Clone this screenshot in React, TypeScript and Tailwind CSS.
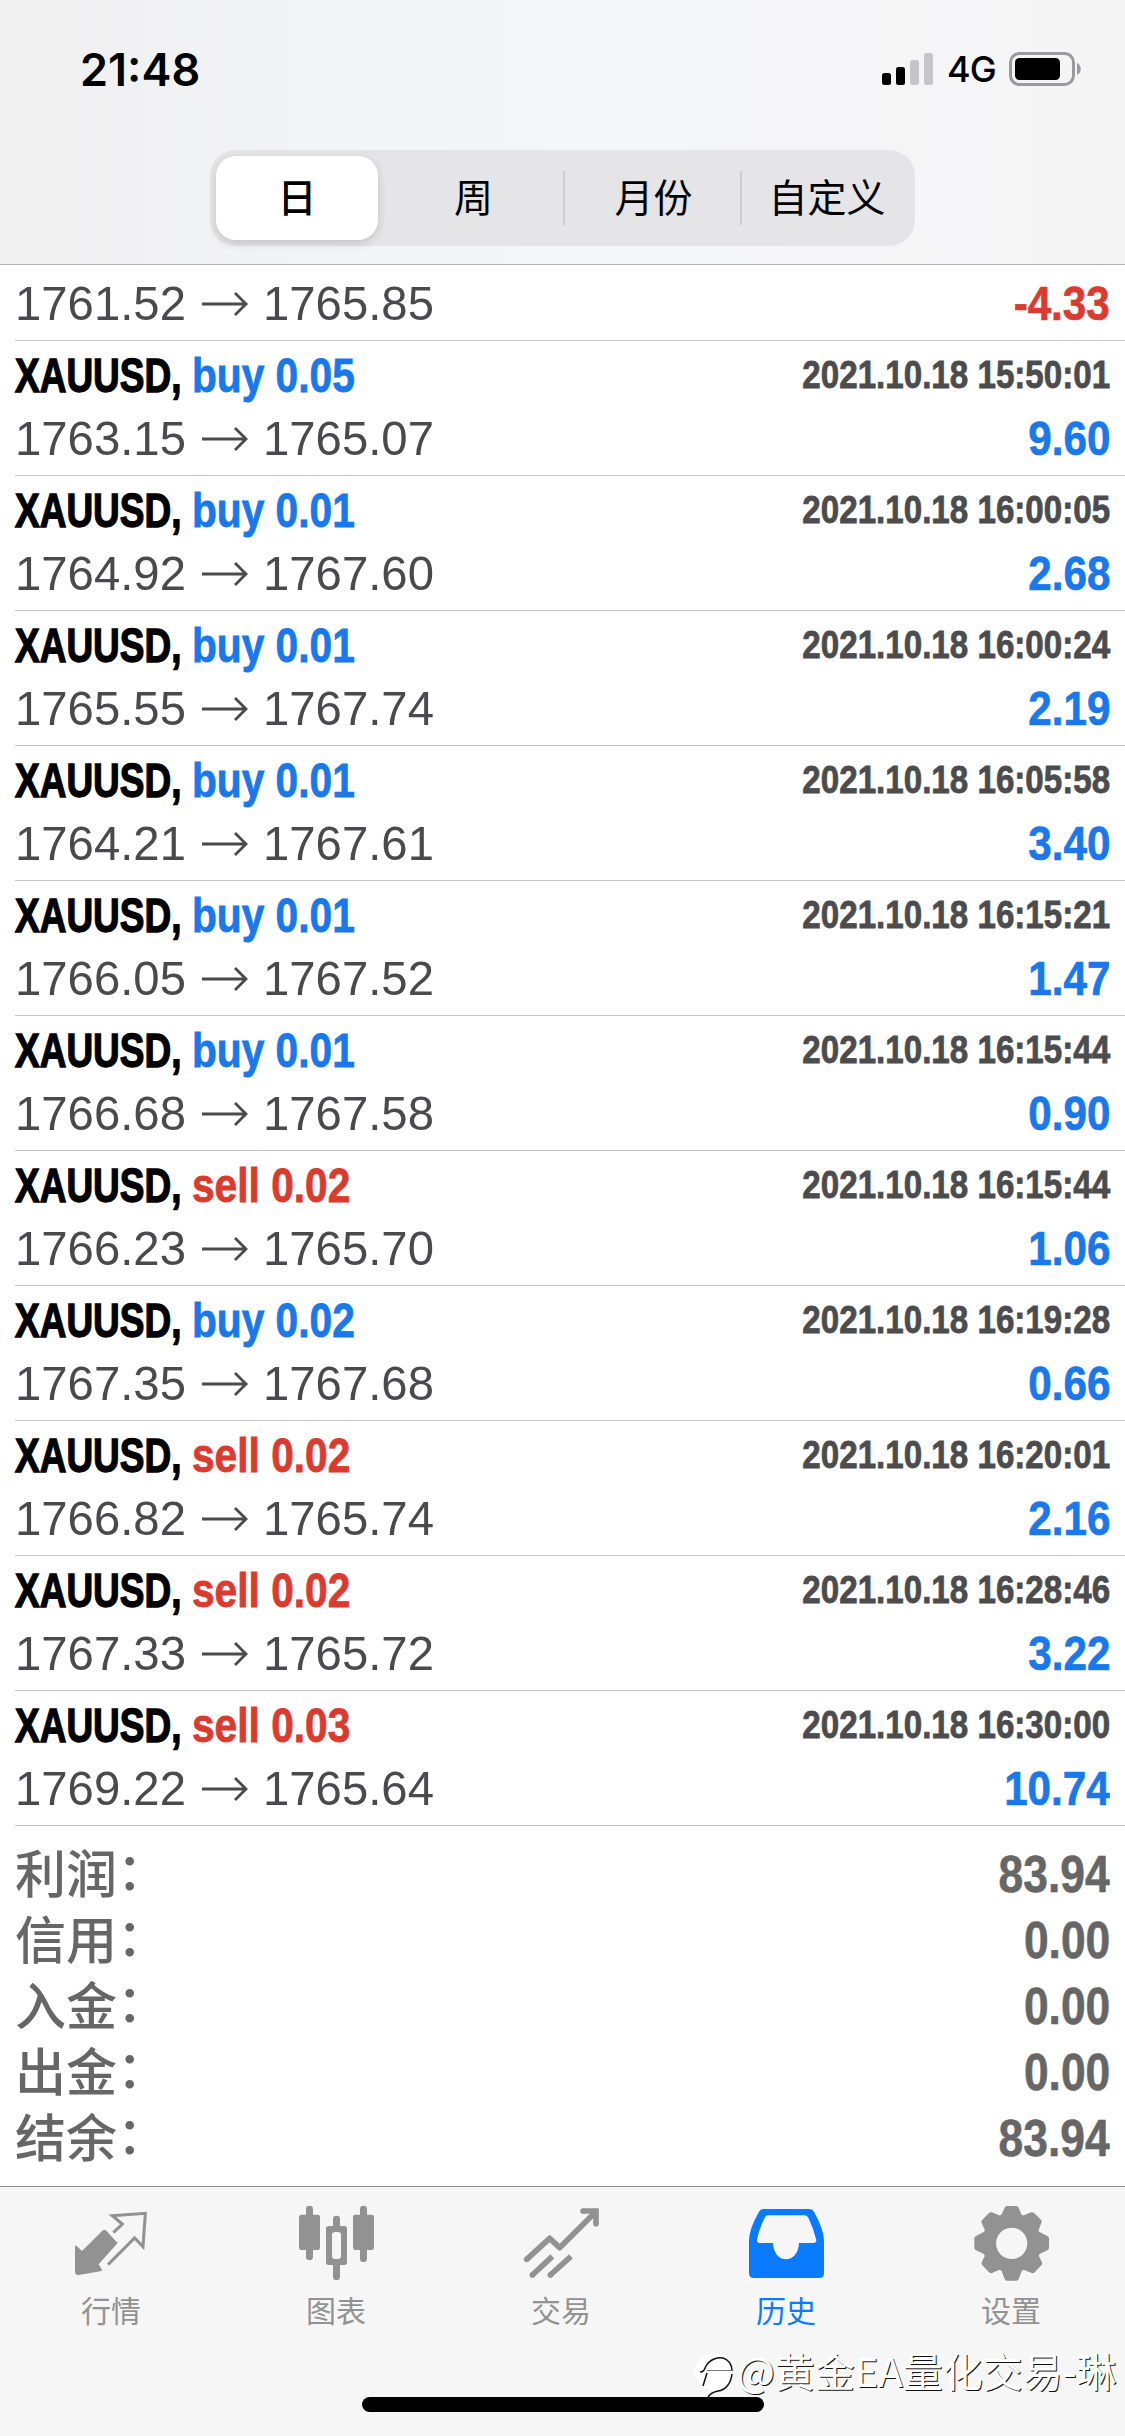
import type { ReactNode } from "react";
import clsx from "clsx";

interface Deal {
  side: "buy" | "sell";
  volume: string;
  open: string;
  close: string;
  time: string;
  profit: string;
}

const deals: Deal[] = [
  { side: "buy", volume: "0.05", open: "1763.15", close: "1765.07", time: "2021.10.18 15:50:01", profit: "9.60" },
  { side: "buy", volume: "0.01", open: "1764.92", close: "1767.60", time: "2021.10.18 16:00:05", profit: "2.68" },
  { side: "buy", volume: "0.01", open: "1765.55", close: "1767.74", time: "2021.10.18 16:00:24", profit: "2.19" },
  { side: "buy", volume: "0.01", open: "1764.21", close: "1767.61", time: "2021.10.18 16:05:58", profit: "3.40" },
  { side: "buy", volume: "0.01", open: "1766.05", close: "1767.52", time: "2021.10.18 16:15:21", profit: "1.47" },
  { side: "buy", volume: "0.01", open: "1766.68", close: "1767.58", time: "2021.10.18 16:15:44", profit: "0.90" },
  { side: "sell", volume: "0.02", open: "1766.23", close: "1765.70", time: "2021.10.18 16:15:44", profit: "1.06" },
  { side: "buy", volume: "0.02", open: "1767.35", close: "1767.68", time: "2021.10.18 16:19:28", profit: "0.66" },
  { side: "sell", volume: "0.02", open: "1766.82", close: "1765.74", time: "2021.10.18 16:20:01", profit: "2.16" },
  { side: "sell", volume: "0.02", open: "1767.33", close: "1765.72", time: "2021.10.18 16:28:46", profit: "3.22" },
  { side: "sell", volume: "0.03", open: "1769.22", close: "1765.64", time: "2021.10.18 16:30:00", profit: "10.74" },
];

const totals = [
  { label: "利润", value: "83.94" },
  { label: "信用", value: "0.00" },
  { label: "入金", value: "0.00" },
  { label: "出金", value: "0.00" },
  { label: "结余", value: "83.94" },
];

function StatusBar() {
  return (
    <div className="flex h-[138px] items-center justify-between pl-[80px] pr-[42px] font-['Inter',sans-serif]">
      <span className="text-[45px] font-semibold leading-none">21:48</span>
      <div className="flex items-center">
        <svg className="h-[34px] w-[52px]" viewBox="0 0 52 34">
          <rect x="0" y="21" width="9" height="12" rx="2.5" />
          <rect x="14" y="15" width="9" height="18" rx="2.5" />
          <rect x="28" y="8" width="9" height="25" rx="2.5" fill="#c6c6c8" />
          <rect x="42" y="1" width="9" height="32" rx="2.5" fill="#c6c6c8" />
        </svg>
        <span className="ml-[13px] w-[62px] text-[36px] font-medium leading-none tracking-[-1px]">4G</span>
        <svg className="h-[34px] w-[74px]" viewBox="0 0 74 34">
          <rect x="1.5" y="1.5" width="63" height="31" rx="9" fill="none" stroke="#9a9a9c" strokeWidth="3" />
          <rect x="6" y="6" width="45" height="22" rx="4.5" />
          <path d="M68 11c5 2 5 10 0 12z" fill="#9a9a9c" />
        </svg>
      </div>
    </div>
  );
}

function PeriodTabs() {
  return (
    <div className="ml-[210px] mt-3 grid h-[96px] w-[705px] grid-cols-[168px_181px_177px_1fr] rounded-[26px] bg-[#e5e5e7] p-[6px] text-center font-['Noto_Sans_CJK_SC',sans-serif] text-[39px] leading-[79px]">
      <div className="mr-[6px] rounded-[20px] bg-white font-medium shadow-[0_3px_10px_rgba(0,0,0,0.15)]">日</div>
      <div className="pr-[2px]">周</div>
      <div className="-ml-[2px] flex items-start">
        <i className="mt-[15px] h-[54px] w-[2px] bg-[#cdcdd0]" />
        <span className="flex-1">月份</span>
      </div>
      <div className="-ml-[2px] flex items-start">
        <i className="mt-[15px] h-[54px] w-[2px] bg-[#cdcdd0]" />
        <span className="flex-1 pl-[3px]">自定义</span>
      </div>
    </div>
  );
}

function PriceLine({ open, close, profit }: { open: string; close: string; profit: string }) {
  return (
    <div className="flex h-[75px] items-center justify-between pr-[15px] pt-[2px] text-[49px] leading-[73px]">
      <div className="flex items-center text-[#4a4a4c]">
        <span className="w-[187px] origin-left scale-x-[0.965] whitespace-nowrap">{open}</span>
        <svg className="h-[24px] w-[46px]" viewBox="0 0 46 24" fill="none" stroke="#4a4a4c" strokeWidth="2.8">
          <path d="M0 12H44M33 1l11 11-11 11" />
        </svg>
        <span className="ml-[15px] origin-left scale-x-[0.965]">{close}</span>
      </div>
      <span
        className={clsx(
          "origin-right scale-x-[0.86] font-bold [-webkit-text-stroke:0.7px_currentColor]",
          profit.startsWith("-") ? "text-[#db3b2f]" : "text-[#1878ec]"
        )}
      >
        {profit}
      </span>
    </div>
  );
}

function DealRow({ deal }: { deal: Deal }) {
  return (
    <div className="ml-[15px] h-[135px] border-b border-[#c4c4c8] pt-[9px]">
      <div className="flex h-[50px] justify-between pr-[15px] font-bold leading-[51px] [-webkit-text-stroke:0.8px_currentColor]">
        <div className="flex text-[49px]">
          <div className="w-[177px]">
            <span className="inline-block origin-left scale-x-[0.755] [-webkit-text-stroke:1.4px_currentColor]">XAUUSD,</span>
          </div>
          <span
            className={clsx(
              "origin-left scale-x-[0.83]",
              deal.side === "buy" ? "text-[#1878ec]" : "text-[#db3b2f]"
            )}
          >
            {deal.side} {deal.volume}
          </span>
        </div>
        <span className="origin-right scale-x-[0.85] text-[39px] leading-[50px] text-[#4c4c4e]">{deal.time}</span>
      </div>
      <PriceLine open={deal.open} close={deal.close} profit={deal.profit} />
    </div>
  );
}

function TabItem({ label, box, active, children }: { label: string; box: string; active?: boolean; children: ReactNode }) {
  return (
    <div className={clsx("flex flex-col items-center pt-[13px]", active ? "text-[#0a7aff]" : "text-[#929292]")}>
      <svg className="h-[90px] w-[90px]" viewBox={box} fill="currentColor">
        {children}
      </svg>
      <span className="pr-[3px] font-['Noto_Sans_CJK_SC',sans-serif] text-[30px] leading-[39px]">{label}</span>
    </div>
  );
}

function TabBar() {
  return (
    <nav className="grid h-[211px] grid-cols-5 border-t border-[#8e8e8e]">
      <TabItem label="行情" box="204 90 270 270">
        <path d="M225 228q2-3 5 0l16 15 61-61q6-5 12 0l34 37-57 64 10 17q0 4-5 4l-65 11q-11 0-11-10z" />
        <path d="M340 188l27-26-30-25 99-7-7 100-25-26-80 80" fill="none" stroke="currentColor" strokeWidth="9" />
      </TabItem>
      <TabItem label="图表" box="879 90 270 270">
        <rect x="918" y="107" width="21" height="163" rx="10" />
        <rect x="897" y="134" width="63" height="106" rx="7" />
        <rect x="1080" y="107" width="21" height="169" rx="10" />
        <rect x="1059" y="134" width="63" height="106" rx="7" />
        <rect x="999" y="137" width="21" height="193" rx="10" />
        <rect x="978" y="168" width="63" height="117" rx="8" />
        <rect x="996" y="186" width="27" height="81" rx="9" fill="#f6f6f6" />
      </TabItem>
      <TabItem label="交易" box="174 90 270 270">
        <g fill="none" stroke="currentColor" strokeWidth="17">
          <path d="M200 268l69-63 30 28 104-103" strokeLinejoin="round" />
          <path d="M217 315l60-56M271 315l62-56M369 123h39v38" />
        </g>
        <circle cx="200" cy="268" r="8.500" />
        <circle cx="217" cy="315" r="8.500" />
        <circle cx="271" cy="315" r="8.500" />
        <circle cx="369" cy="123" r="8.500" />
        <circle cx="408" cy="161" r="8.500" />
      </TabItem>
      <TabItem label="历史" box="159 90 270 270" active>
        <path
          fillRule="evenodd"
          d="M220 117H359q9 0 13 8 29 52 30 87V310q0 14-14 14H191q-14 0-14-14V212q0-35 30-87 4-8 13-8ZM235 136q-8 0-11 7-17 36-23 66 0 10 9 10h39c1 30 18 49 39 49s38-19 39-49h43q9 0 9-9-9-36-24-67-4-7-12-7Z"
        />
      </TabItem>
      <TabItem label="设置" box="834 90 270 270">
        <path
          fillRule="evenodd"
          d="M951 108h28q5 0 7 5l8 20q3 4 8 3l21-9q5-1 9 2l21 20q3 4 1 9l-8 22q-1 5 4 7l22 11q5 2 5 7v28q0 5-5 8l-22 10q-4 3-3 8l9 18q2 5-2 9l-20 21q-4 4-9 2l-22-9q-6-1-8 4l-9 23q-2 5-7 5h-28q-5 0-7-5l-9-23q-3-5-8-4l-21 9q-5 2-9-2l-20-21q-3-4-2-9l9-18q1-5-4-8l-22-10q-5-3-5-8v-28q0-5 5-7l22-11q5-3 4-8l-9-21q-2-5 2-9l20-20q4-3 9-2l21 9q5 1 8-3l9-20q2-5 7-5ZM965 173a47 47 0 1 0 .1 0Z"
        />
      </TabItem>
    </nav>
  );
}

function Watermark() {
  return (
    <div className="absolute bottom-[43px] left-[694px] flex items-center">
      <svg className="h-[46px] w-[43px] overflow-visible" viewBox="0 0 43 46" fill="none">
        <circle cx="19" cy="25" r="18" fill="#fff" />
        <path d="M6 25C9 25 10 24 12 19C16 12 24 10 29 11C35 13 38 18 38 24" stroke="#111" strokeWidth="1.500" />
        <path d="M13 23.500H38" stroke="#777" />
        <path d="M13 26L9 39M38 27C37 36 32 43 24 44c-5 1-8 3-10 6" stroke="#111" strokeWidth="1.500" />
      </svg>
      <span className="whitespace-nowrap font-['Noto_Sans_CJK_SC',sans-serif] text-[40px] leading-[46px] text-white [text-shadow:1px_1px_0_#111]">
        @黄金EA量化交易-琳
      </span>
    </div>
  );
}

export default function App() {
  return (
    <div className="relative flex h-[2436px] w-[1125px] flex-col overflow-hidden bg-white font-['Liberation_Sans',sans-serif] text-black">
      <header className="h-[265px] border-b border-[#b2b2b5] bg-linear-to-r from-[#f0f0f1] via-[#f5f6f8] to-[#f6f5f6]">
        <StatusBar />
        <PeriodTabs />
      </header>
      <main className="h-[1921px]">
        <div className="ml-[15px] h-[76px] border-b border-[#c4c4c8]">
          <PriceLine open="1761.52" close="1765.85" profit="-4.33" />
        </div>
        {deals.map((deal, i) => (
          <DealRow key={i} deal={deal} />
        ))}
        <div className="pl-[15px] pr-[15px] pt-[15px] text-[#666]">
          {totals.map((row) => (
            <div key={row.label} className="flex h-[66px] justify-between">
              <div className="flex font-['Noto_Sans_CJK_SC',sans-serif] text-[51px] font-medium leading-[60px]">
                <span>{row.label}</span>
                <span className="leading-[54px]">：</span>
              </div>
              <span className="origin-right scale-x-[0.87] text-[51px] font-bold leading-[67px] [-webkit-text-stroke:0.6px_currentColor]">
                {row.value}
              </span>
            </div>
          ))}
        </div>
      </main>
      <footer className="h-[250px] bg-[#f6f6f6]">
        <TabBar />
        <div className="ml-[362px] h-[15px] w-[402px] rounded-full bg-black" />
      </footer>
      <Watermark />
    </div>
  );
}
